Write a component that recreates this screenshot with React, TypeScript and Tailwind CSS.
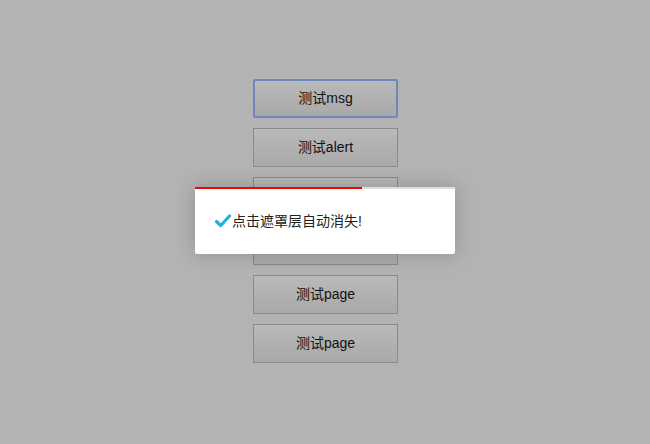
import React from "react";

const btn =
  "w-[145px] h-[39px] flex items-center justify-center text-[14px] text-[#111] bg-gradient-to-b from-[#b9b9b9] to-[#a9a9a9]";

export default function App() {
  const labels = ["测试msg", "测试alert", "测试confirm", "测试prompt", "测试page", "测试page"];
  return (
    <div
      className="relative w-[650px] h-[444px] bg-[#b3b3b3] overflow-hidden"
      style={{ fontFamily: '"Liberation Sans", Arial, "Noto Sans CJK SC", sans-serif' }}
    >
      <div className="flex flex-col items-center gap-[10px] pt-[79px] pl-[1px]">
        {labels.map((l, i) => (
          <div
            key={i}
            className={`${btn} ${i === 0 ? "border-2 border-[#6f86b8] rounded-[2px]" : "border border-[#8a8a8a]"}`}
          >
            {l}
          </div>
        ))}
      </div>
      <div className="absolute left-[195px] top-[187px] w-[260px] h-[67px] bg-white rounded-b-[2px] shadow-[0_0_20px_rgba(0,0,0,0.2)] flex flex-col">
        <div className="h-[2px] w-full bg-[#dedede]">
          <div className="h-full w-[167px] bg-[#ff0000]" />
        </div>
        <div className="flex-1 flex items-center pl-[20px] pb-[1px]">
          <svg width="16" height="14" viewBox="0 0 16 14" className="mr-[1px]">
            <path
              d="M1.5 7.5 L5.8 11.5 L14.5 2"
              fill="none"
              stroke="#1eb3e8"
              strokeWidth="3.2"
              strokeLinecap="round"
              strokeLinejoin="round"
            />
          </svg>
          <span className="text-[14px] text-[#222]">点击遮罩层自动消失!</span>
        </div>
      </div>
    </div>
  );
}
